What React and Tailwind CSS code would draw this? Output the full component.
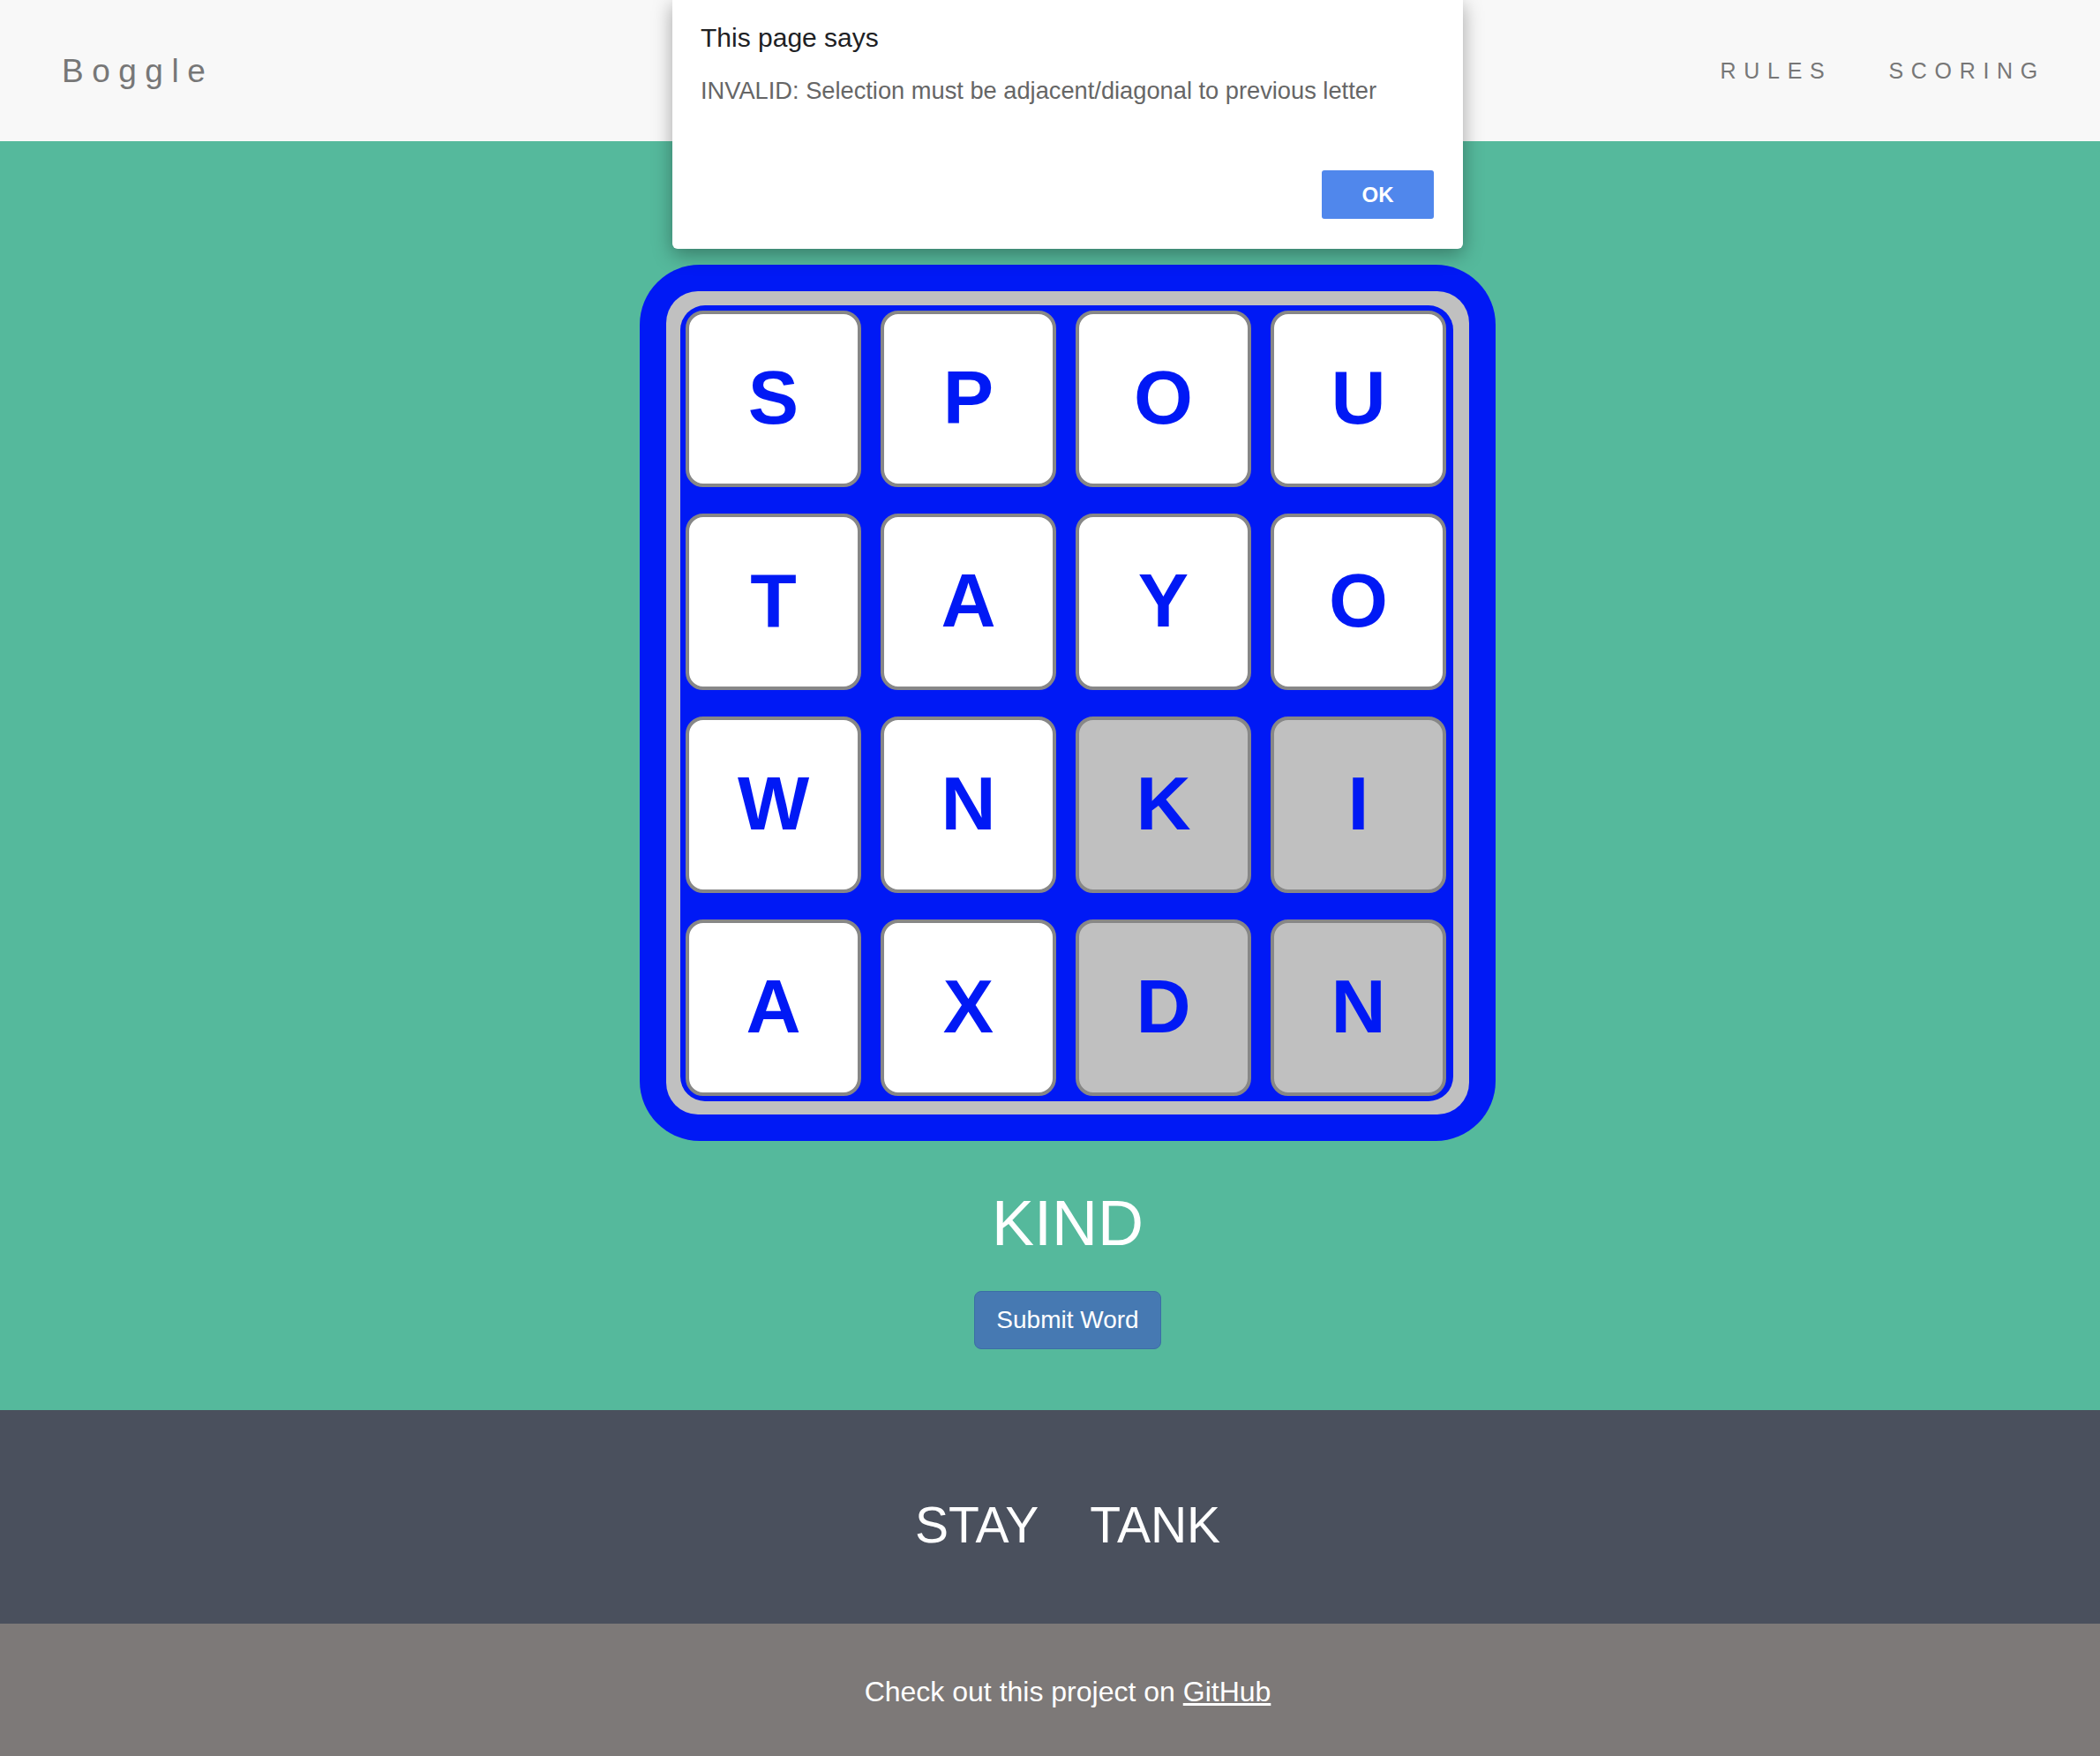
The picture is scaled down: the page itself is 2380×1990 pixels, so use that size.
const tiles = [
  ['S', false], ['P', false], ['O', false], ['U', false],
  ['T', false], ['A', false], ['Y', false], ['O', false],
  ['W', false], ['N', false], ['K', true], ['I', true],
  ['A', false], ['X', false], ['D', true], ['N', true],
];

export default function App() {
  return (
    <div className="relative w-[2380px] h-[1990px] overflow-hidden font-['Liberation_Sans',Arial,sans-serif]">
      <header className="h-[160px] bg-[#f8f8f8] flex items-center justify-between pl-[70px] pr-[62px]">
        <div className="text-[37px] leading-none tracking-[9.5px] text-[#777777]">Boggle</div>
        <nav className="flex gap-[64px] text-[25px] leading-none tracking-[8.7px] text-[#777777]">
          <span>RULES</span>
          <span>SCORING</span>
        </nav>
      </header>

      <main className="h-[1438px] bg-[#55b99c] flex flex-col items-center pl-[40px] pt-[140px]">
        <div className="p-[30px] rounded-[68px] bg-[#0019f5]">
          <div className="pt-[16px] pb-[15px] pl-[16px] pr-[18px] rounded-[36px] bg-[#c0c0c0]">
            <div className="pt-[6px] pb-[6px] pl-[6px] pr-[8px] rounded-[28px] bg-[#0019f5] grid grid-cols-[repeat(4,199px)] grid-rows-[repeat(4,200px)] gap-x-[22px] gap-y-[30px]">
              {tiles.map(([l, sel], i) => (
                <div
                  key={i}
                  className={
                    sel
                      ? 'border-4 border-[#878787] rounded-[20px] bg-[#c0c0c0] flex items-center justify-center pb-[4px] text-[86px] font-bold leading-none text-[#0019f5]'
                      : 'border-4 border-[#878787] rounded-[20px] bg-white flex items-center justify-center pb-[4px] text-[86px] font-bold leading-none text-[#0019f5]'
                  }
                >
                  {l}
                </div>
              ))}
            </div>
          </div>
        </div>
        <div className="mt-[57px] text-[72px] leading-none text-white">KIND</div>
        <button className="mt-[41px] w-[212px] h-[66px] rounded-[8px] border border-[#3b6ea5] bg-[#4679b2] text-white text-[28px] leading-[40px]">
          Submit Word
        </button>
      </main>

      <section className="h-[242px] bg-[#4a505d] flex justify-center gap-[58px] pl-[40px] pt-[102px] text-[57px] leading-none text-white">
        <span>STAY</span>
        <span>TANK</span>
      </section>

      <footer className="h-[150px] bg-[#7d7978] flex justify-center pl-[40px] pt-[61px] text-[32px] leading-none text-white">
        <span>
          Check out this project on <span className="underline">GitHub</span>
        </span>
      </footer>

      <div className="absolute top-0 left-[762px] w-[896px] h-[282px] bg-white rounded-b-[6px] shadow-[0_6px_22px_rgba(0,0,0,0.35)] pt-[28px] pl-[32px] pr-[33px] flex flex-col">
        <div className="text-[30px] leading-none text-[#202124]">This page says</div>
        <div className="mt-[31px] text-[27.25px] leading-none text-[#666666]">
          INVALID: Selection must be adjacent/diagonal to previous letter
        </div>
        <div className="mt-[77px] flex justify-end">
          <button className="w-[127px] h-[55px] rounded-[3px] bg-[#5087ec] text-white text-[24px] font-bold leading-none">
            OK
          </button>
        </div>
      </div>
    </div>
  );
}
